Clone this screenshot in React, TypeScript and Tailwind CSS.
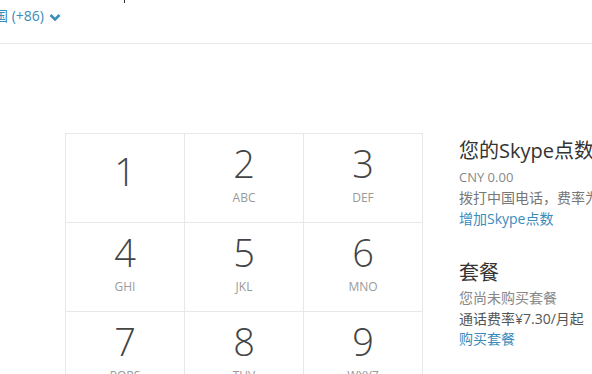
import React from 'react';

const keys = [
  { d: '1', l: '' },
  { d: '2', l: 'ABC' },
  { d: '3', l: 'DEF' },
  { d: '4', l: 'GHI' },
  { d: '5', l: 'JKL' },
  { d: '6', l: 'MNO' },
  { d: '7', l: 'PQRS' },
  { d: '8', l: 'TUV' },
  { d: '9', l: 'WXYZ' },
];

export default function App() {
  return (
    <div
      className="relative w-[592px] h-[374px] overflow-hidden bg-white"
      style={{ fontFamily: '"Open Sans", "Noto Sans CJK SC", sans-serif' }}
    >
      {/* stray cursor mark */}
      <div className="absolute left-[124px] top-0 w-px h-[3px] bg-[#333]" />

      {/* Country selector */}
      <div className="h-[44px] border-b border-[#e8e8e8]">
        <div className="flex items-center gap-[5px] -ml-[6px] pt-[5px] text-[14px] leading-[22px] text-[#3a8cbb] whitespace-nowrap">
          <span>国 (+86)</span>
          <svg width="12" height="9" viewBox="0 0 12 9" className="mt-[2px]">
            <polyline points="1.5,2 6,6.5 10.5,2" fill="none" stroke="#3a8cbb" strokeWidth="2.6" />
          </svg>
        </div>
      </div>

      <div className="flex items-start pl-[65px] pt-[89px]">
        {/* Keypad */}
        <div className="grid grid-cols-[119px_119px_119px] border-l border-t border-[#e8e8e8] shrink-0">
          {keys.map((k) => (
            <div
              key={k.d}
              className={
                'h-[89px] border-r border-b border-[#e8e8e8] flex flex-col items-center ' +
                (k.l ? 'pt-[10px]' : 'pt-[18px]')
              }
            >
              <span className="text-[38px] leading-[38px] font-light text-[#444]">{k.d}</span>
              {k.l && (
                <span className="mt-[9px] text-[12px] leading-[14px] text-[#9a9a9a]">{k.l}</span>
              )}
            </div>
          ))}
        </div>

        {/* Credit and plans */}
        <div className="ml-[36px] pt-[3px] whitespace-nowrap">
          <h2 className="text-[20px] leading-[30px] text-[#333]">您的Skype点数</h2>
          <p className="mt-[1px] text-[13px] leading-[20px] text-[#888]">CNY 0.00</p>
          <p className="text-[14px] leading-[21px] text-[#777]">拨打中国电话，费率为¥0.10/分钟</p>
          <a className="block text-[14px] leading-[21px] text-[#3a8cbb]">增加Skype点数</a>

          <h2 className="mt-[29px] text-[20px] leading-[30px] text-[#333]">套餐</h2>
          <p className="mt-[-1px] text-[14px] leading-[21px] text-[#888]">您尚未购买套餐</p>
          <p className="text-[14px] leading-[21px] text-[#555]">通话费率¥7.30/月起</p>
          <a className="block text-[14px] leading-[20px] text-[#3a8cbb]">购买套餐</a>
        </div>
      </div>
    </div>
  );
}
